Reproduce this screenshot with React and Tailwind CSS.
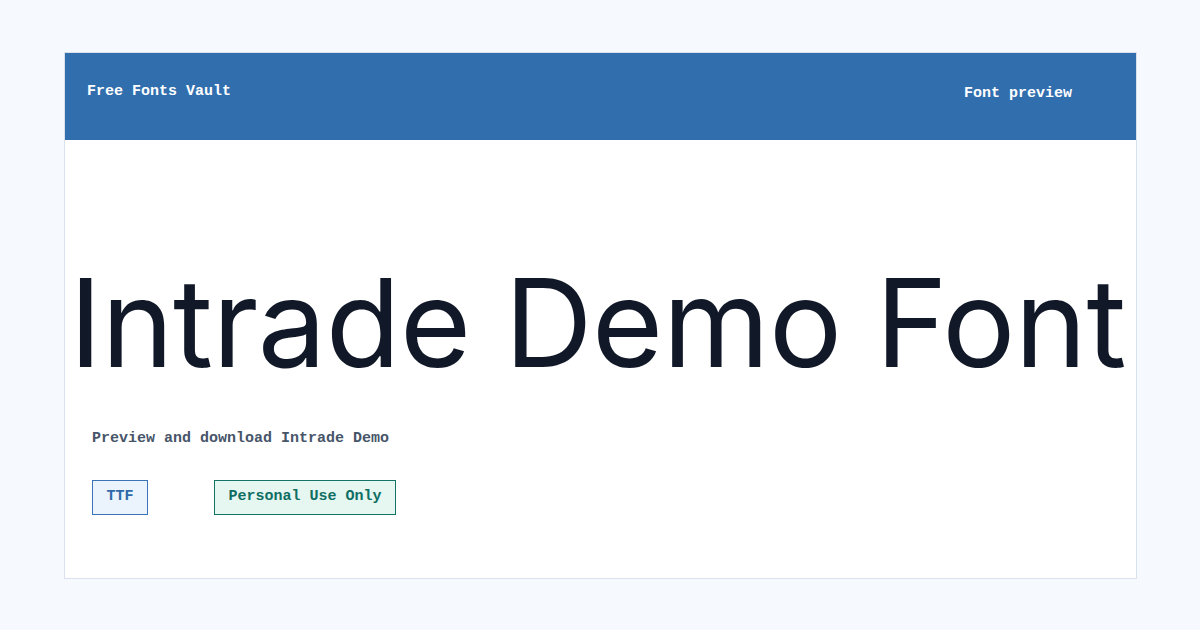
const mono = { fontFamily: '"Liberation Mono", "Courier New", monospace' }

function Badge({ children, className }) {
  return (
    <span className={`inline-flex h-[35px] items-center border px-[13.5px] text-[15px] font-bold ${className}`}>
      {children}
    </span>
  )
}

export default function App() {
  return (
    <div className="min-h-[630px] w-full bg-[#f6f9fd] pt-[52px]" style={mono}>
      <div className="mx-[64px] w-[1073px] border border-[#d9e2ec] bg-white">
        <header className="flex h-[87px] items-start justify-between bg-[#306eae] pl-[22px] pr-[64px] text-[15px] font-bold text-white">
          <span className="mt-[28px]">Free Fonts Vault</span>
          <span className="mt-[30px]">Font preview</span>
        </header>

        <main className="px-[27px] pb-[63px]">
          <h1
            className="-ml-[30px] -mr-[24px] mt-[122px] whitespace-nowrap text-center text-[122px] font-normal leading-none tracking-[-0.5px] text-[#111827]"
            style={{ fontFamily: 'Inter, "Noto Sans", sans-serif' }}
          >
            Intrade Demo Font
          </h1>
          <p className="mt-[44px] text-[15px] font-bold text-[#475569]">Preview and download Intrade Demo</p>
          <div className="mt-[29px] flex gap-[66px]">
            <Badge className="border-[#3a74b5] bg-[#ebf3fd] text-[#2f69a8]">TTF</Badge>
            <Badge className="border-[#137466] bg-[#e6f6f1] text-[#0f6e63]">Personal Use Only</Badge>
          </div>
        </main>
      </div>
    </div>
  )
}
